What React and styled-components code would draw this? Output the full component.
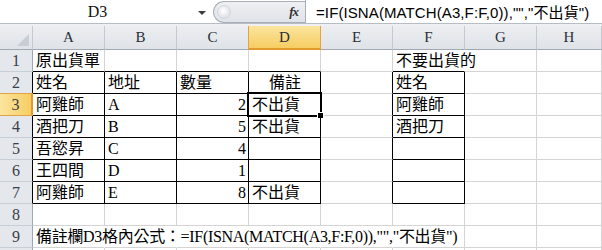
import React from "react";
import styled, { createGlobalStyle, css } from "styled-components";

const Global = createGlobalStyle`
  html, body { margin: 0; padding: 0; background: #ffffff; }
  body { width: 602px; height: 250px; overflow: hidden; }
  * { box-sizing: border-box; }
`;

const Window = styled.div`
  width: 602px;
  height: 250px;
  overflow: hidden;
  background: #fff;
  display: flex;
  flex-direction: column;
`;

const FormulaBar = styled.div`
  display: flex;
  height: 24px;
  border-bottom: 1px solid #b6bcc4;
  background: #fff;
  flex-shrink: 0;
`;

const NameBox = styled.div`
  width: 213px;
  display: flex;
  align-items: center;
  position: relative;
`;

const NameText = styled.span`
  flex: 1;
  text-align: center;
  padding-right: 18px;
  font-family: "Liberation Serif", serif;
  font-size: 16px;
  color: #111;
`;

const DropArrow = styled.span`
  position: absolute;
  right: 7px;
  top: 11px;
  width: 0;
  height: 0;
  border-left: 4px solid transparent;
  border-right: 4px solid transparent;
  border-top: 4px solid #3c3c3c;
`;

const FxPanel = styled.div`
  width: 92px;
  margin-top: 1px;
  height: 22px;
  display: flex;
  align-items: center;
  justify-content: space-between;
  padding: 0 7px 0 3px;
  background: linear-gradient(#eef0f3, #dfe2e7);
  border: 1px solid #a9afb8;
  border-right: none;
  border-radius: 11px 0 0 11px;
`;

const Knob = styled.span`
  width: 14px;
  height: 14px;
  border-radius: 50%;
  background: radial-gradient(circle at 45% 40%, #ffffff, #e3e6ea 60%, #cfd4da);
  border: 1px solid #d3d7dc;
`;

const Fx = styled.span`
  font-family: "Liberation Serif", serif;
  font-style: italic;
  font-weight: bold;
  font-size: 13px;
  color: #333;
  letter-spacing: -1px;
`;

const FormulaInput = styled.div`
  flex: 1;
  border-left: 1px solid #a9afb8;
  display: flex;
  align-items: center;
  padding-left: 10px;
  font-family: "Liberation Sans", "Noto Sans CJK TC", sans-serif;
  font-size: 15px;
  letter-spacing: 0.1px;
  color: #000;
  white-space: nowrap;
  overflow: hidden;
`;

const Spacer = styled.div`
  height: 2px;
  background: #eef0f3;
  flex-shrink: 0;
`;

const Sheet = styled.div`
  display: grid;
  grid-template-columns: 33px repeat(7, 72px) 1fr;
  grid-template-rows: 24px repeat(10, 22px);
  background: #fff;
`;

const hiHeader = css`
  background: linear-gradient(#fbe59f, #f7cd62);
`;

const ColHead = styled.div`
  display: flex;
  align-items: center;
  justify-content: center;
  background: linear-gradient(#eceef1, #dfe3e8);
  border-right: 1px solid #c3c9d0;
  border-bottom: 1px solid #9ea8b3;
  font-family: "Liberation Serif", serif;
  font-size: 15px;
  color: #2a2f36;
  ${(p) =>
    p.$active &&
    css`
      ${hiHeader};
      border-right: 1px solid #e0a347;
      border-left: 1px solid #e0a347;
      border-bottom: 2px solid #e39a2c;
      margin-left: -1px;
    `}
`;

const Corner = styled(ColHead)`
  position: relative;
  &::after {
    content: "";
    position: absolute;
    right: 3px;
    bottom: 3px;
    width: 0;
    height: 0;
    border-left: 12px solid transparent;
    border-bottom: 12px solid #c8cdd3;
  }
`;

const RowHead = styled.div`
  display: flex;
  align-items: center;
  justify-content: center;
  background: #e4e7eb;
  border-bottom: 1px solid #c8ced5;
  border-right: 1px solid ${(p) => (p.$black ? "#000" : "#9ea8b3")};
  font-family: "Liberation Serif", serif;
  font-size: 16px;
  color: #3a4048;
  ${(p) =>
    p.$active &&
    css`
      background: linear-gradient(90deg, #fbe59f, #f7cd62);
      border-bottom: 1px solid #e0a347;
      border-top: 1px solid #e0a347;
      margin-top: -1px;
      border-right: 2px solid #e39a2c;
    `}
`;

const borderColor = (v) =>
  v === "black" ? "#000" : v === "none" ? "transparent" : "#d4d4d4";

const Cell = styled.div`
  position: relative;
  display: flex;
  align-items: center;
  justify-content: ${(p) =>
    p.$align === "right" ? "flex-end" : p.$align === "center" ? "center" : "flex-start"};
  padding: 0 2px 0 3px;
  border-right: 1px solid ${(p) => borderColor(p.$right)};
  border-bottom: 1px solid ${(p) => borderColor(p.$bottom)};
  font-family: "Liberation Serif", "Noto Sans CJK TC", serif;
  font-size: 16px;
  line-height: 21px;
  letter-spacing: ${(p) => (p.$tight ? "-0.3px" : "0")};
  color: #000;
  white-space: nowrap;
  overflow: visible;
  z-index: ${(p) => (p.$over ? 2 : 1)};
`;

const Selection = styled.div`
  position: absolute;
  left: -2px;
  top: -2px;
  right: -2px;
  bottom: -2px;
  border: 2px solid #000;
  box-shadow: inset 0 0 0 1px #fff;
  pointer-events: none;
  z-index: 3;
`;

const FillHandle = styled.div`
  position: absolute;
  right: -4px;
  bottom: -4px;
  width: 7px;
  height: 7px;
  background: #000;
  border: 1px solid #fff;
  z-index: 4;
`;

const COLS = ["A", "B", "C", "D", "E", "F", "G", "H"];

const FORMULA = '=IF(ISNA(MATCH(A3,F:F,0)),"","不出貨")';

const data = {
  1: { A: "原出貨單", F: "不要出貨的" },
  2: { A: "姓名", B: "地址", C: "數量", D: "備註", F: "姓名" },
  3: { A: "阿雞師", B: "A", C: "2", D: "不出貨", F: "阿雞師" },
  4: { A: "酒把刀", B: "B", C: "5", D: "不出貨", F: "酒把刀" },
  5: { A: "吾慾昇", B: "C", C: "4" },
  6: { A: "王四間", B: "D", C: "1" },
  7: { A: "阿雞師", B: "E", C: "8", D: "不出貨" },
  9: { A: "備註欄D3格內公式：" + FORMULA },
};

function cellProps(r, c) {
  let right = "grid";
  let bottom = "grid";
  let align = "left";
  const leftTable = ["A", "B", "C", "D"].includes(c);
  if (r >= 2 && r <= 7 && leftTable) {
    right = "black";
    bottom = "black";
  }
  if (r === 1 && (leftTable || c === "F")) bottom = "black";
  if (r >= 2 && r <= 7 && c === "E") right = "black";
  if (r >= 2 && r <= 7 && c === "F") {
    right = "black";
    bottom = "black";
  }
  if (r === 1 && c === "F") right = "none";
  if (r === 9 && ["A", "B", "C", "D", "E"].includes(c)) right = "none";
  if (c === "C" && r >= 3 && r <= 7) align = "right";
  if (c === "D" && r === 2) align = "center";
  return { right, bottom, align };
}

export default function App() {
  const rows = [];
  for (let r = 1; r <= 10; r++) {
    rows.push(
      <RowHead key={`h${r}`} $active={r === 3} $black={r >= 2 && r <= 7}>
        {r <= 9 ? r : null}
      </RowHead>
    );
    COLS.forEach((c) => {
      const p = cellProps(r, c);
      const text = data[r] && data[r][c];
      rows.push(
        <Cell
          key={`${c}${r}`}
          $right={p.right}
          $bottom={p.bottom}
          $align={p.align}
          $over={!!text}
          $tight={r === 9}
        >
          {text}
          {r === 3 && c === "D" && (
            <Selection>
              <FillHandle />
            </Selection>
          )}
        </Cell>
      );
    });
  }

  return (
    <Window>
      <Global />
      <FormulaBar>
        <NameBox>
          <NameText>D3</NameText>
          <DropArrow />
        </NameBox>
        <FxPanel>
          <Knob />
          <Fx>fx</Fx>
        </FxPanel>
        <FormulaInput>{FORMULA}</FormulaInput>
      </FormulaBar>
      <Spacer />
      <Sheet>
        <Corner />
        {COLS.map((c) => (
          <ColHead key={c} $active={c === "D"}>
            {c}
          </ColHead>
        ))}
        {rows}
      </Sheet>
    </Window>
  );
}
